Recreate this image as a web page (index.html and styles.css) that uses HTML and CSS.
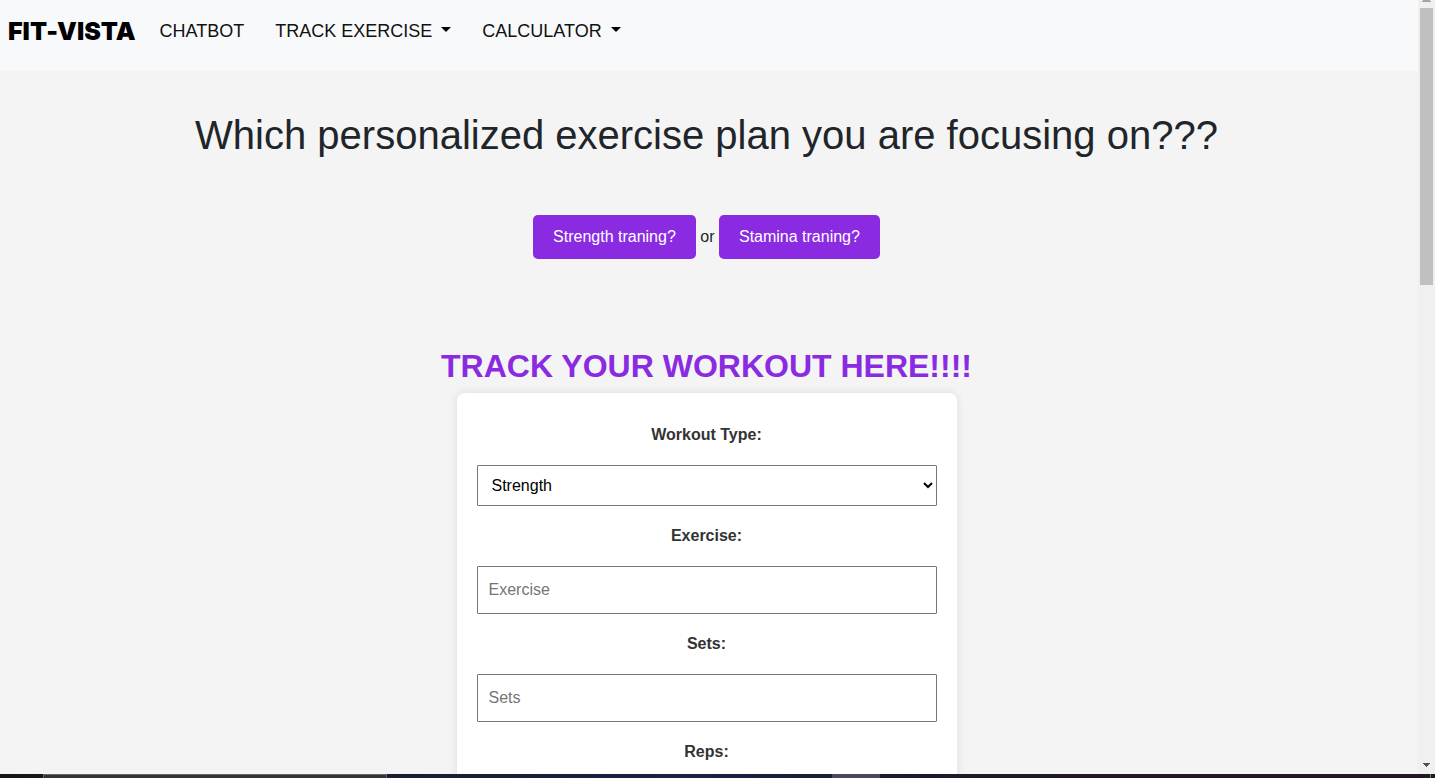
FILE: index.html
```html
<!DOCTYPE html>
<html lang="en">
<head>
<meta charset="utf-8">
<meta name="viewport" content="width=device-width, initial-scale=1">
<title>FIT-VISTA</title>
<link rel="stylesheet" href="styles.css">
</head>
<body>
<div class="screen">
  <div class="page">
    <nav class="navbar">
      <a class="brand" href="#">FIT-VISTA</a>
      <a class="nav-link" href="#">CHATBOT</a>
      <a class="nav-link dropdown" href="#">TRACK EXERCISE</a>
      <a class="nav-link dropdown" href="#">CALCULATOR</a>
    </nav>
    <main class="content">
      <h1 class="title">Which personalized exercise plan you are focusing on???</h1>
      <div class="choices">
        <button class="choice" type="button">Strength traning?</button>
        <span>or</span>
        <button class="choice" type="button">Stamina traning?</button>
      </div>
      <h2 class="subtitle">TRACK YOUR WORKOUT HERE!!!!</h2>
      <form class="card">
        <label class="label" for="type">Workout Type:</label>
        <select class="field select" id="type">
          <option>Strength</option>
          <option>Stamina</option>
        </select>
        <label class="label" for="exercise">Exercise:</label>
        <input class="field" id="exercise" type="text" placeholder="Exercise">
        <label class="label" for="sets">Sets:</label>
        <input class="field" id="sets" type="text" placeholder="Sets">
        <label class="label" for="reps">Reps:</label>
        <input class="field" id="reps" type="text" placeholder="Reps">
      </form>
    </main>
  </div>
  <div class="scrollbar" aria-hidden="true">
    <svg class="arrow" width="17" height="8" viewBox="0 0 17 8"><path d="M5 0h7v1h1v1H4V1h1z" fill="#a3a3a3"/></svg>
    <div class="thumb"></div>
    <svg class="arrow arrow-down" width="17" height="12" viewBox="0 0 17 12"><path d="M5 1h7v1h-1v1h-1v1H9v1H8V4H7V3H6V2H5z" fill="#505050"/></svg>
  </div>
  <div class="taskbar" aria-hidden="true">
    <div class="task-search"></div>
    <div class="task-active"></div>
    <div class="task-edge"></div>
  </div>
</div>
</body>
</html>
```
FILE: styles.css
```css
* {
  box-sizing: border-box;
}

body {
  margin: 0;
  background: #f4f4f4;
  color: #212529;
  font: 16px/24px "Liberation Sans", Arial, sans-serif;
}

.screen {
  display: grid;
  grid-template-columns: minmax(0, 1fr) 17px;
  grid-template-rows: minmax(0, 1fr) 4px;
  height: 100vh;
}

.page {
  overflow: hidden;
}

.navbar {
  display: flex;
  align-items: flex-start;
  padding: 12px 8px 20px;
  min-height: 71px;
  background: #f8f9fb;
}

.brand {
  margin-right: 24px;
  color: #000;
  font: 900 25px/39px Inter, "Liberation Sans", sans-serif;
  font-feature-settings: "calt" 0;
  text-decoration: none;
}

.nav-link {
  display: flex;
  align-items: center;
  margin-right: 31px;
  color: #111;
  font-size: 18px;
  line-height: 38px;
  text-decoration: none;
}

.dropdown::after {
  content: "";
  margin: 0 0 3px 9px;
  border: 5px solid transparent;
  border-top-color: #000;
  border-bottom: 0;
}

.content {
  padding: 40px 5px 0 0;
  text-align: center;
}

.title {
  margin: 0;
  font-size: 40px;
  font-weight: 400;
  line-height: 48px;
}

.choices {
  margin: 56px 0 88px;
}

.choice {
  padding: 10px 20px;
  border: 0;
  border-radius: 5px;
  background: #8a2be2;
  color: #fff;
  font: inherit;
}

.subtitle {
  margin: 0 0 8px;
  color: #8a2be2;
  font-size: 32px;
  line-height: 38px;
}

.card {
  max-width: 500px;
  margin: 0 auto;
  padding: 30px 20px;
  border-radius: 8px;
  background: #fff;
  box-shadow: 0 0 10px rgba(0, 0, 0, 0.1);
}

.label {
  display: block;
  margin-bottom: 18px;
  color: #333;
  font-weight: 700;
}

.field {
  display: block;
  width: 100%;
  height: 48px;
  margin-bottom: 18px;
  padding: 10px 11px;
  border: 1px solid #767676;
  border-radius: 1px;
  background: #fff;
  color: #000;
  font: inherit;
}

.field::placeholder {
  color: #757575;
}

.select {
  height: 41px;
  padding: 0 1px 0 10px;
}

.scrollbar {
  display: flex;
  flex-direction: column;
  background: #f0f0f0;
}

.arrow {
  display: block;
  flex: none;
}

.arrow-down {
  margin-top: auto;
}

.thumb {
  height: 35.8%;
  margin: 0 2px;
  background: #c0c0c0;
}

.taskbar {
  display: flex;
  grid-column: 1 / -1;
  padding-left: 3%;
  background: linear-gradient(90deg, #161616, #1a1c30 27%, #1c2042 48%, #1a1b30 62%, #201822 75%, #201822);
}

.task-search {
  width: 24.7%;
  border: 1px solid #666;
  border-bottom: 0;
  background: #333;
}

.task-active {
  width: 48px;
  margin-left: 32%;
  background: #4a4860;
}

.task-edge {
  width: 1px;
  margin: 0 4px 0 auto;
  background: #777;
}
```
